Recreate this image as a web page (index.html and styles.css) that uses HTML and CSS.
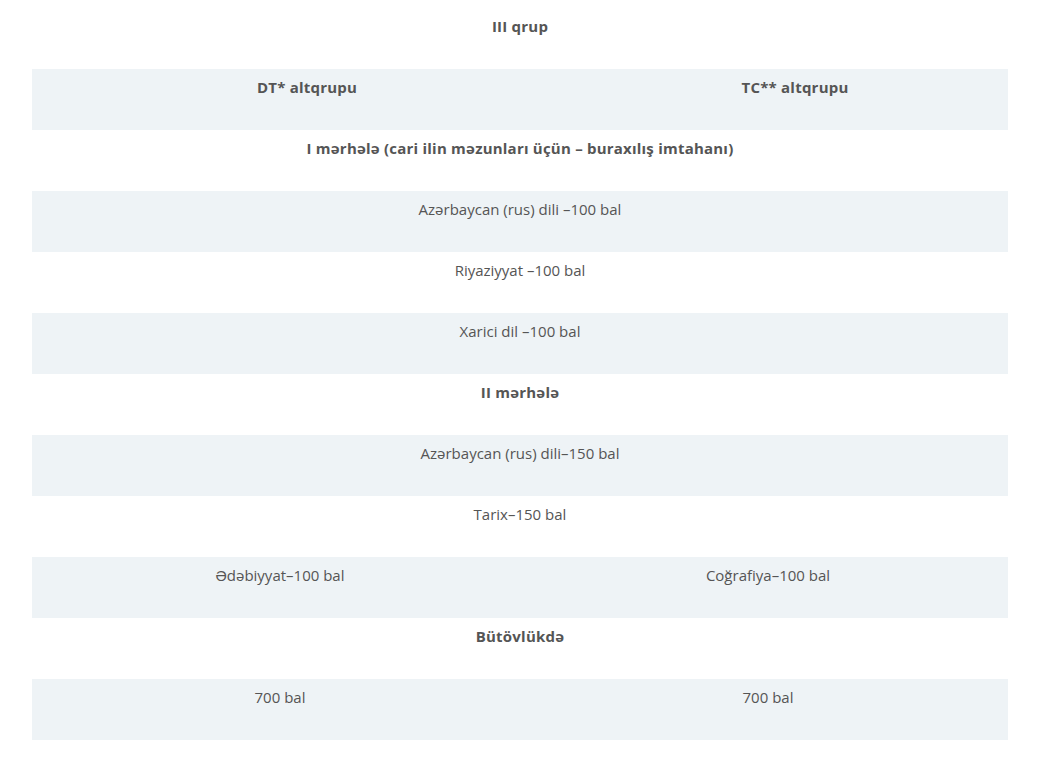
FILE: index.html
```html
<!DOCTYPE html>
<html>
<head>
<meta charset="utf-8">
<link rel="stylesheet" href="styles.css">
</head>
<body>
<div class="table">
  <div class="row"><div class="cell b">III qrup</div></div>
  <div class="row alt head"><div class="cell b">DT* altqrupu</div><div class="cell b">TC** altqrupu</div></div>
  <div class="row"><div class="cell b">I mərhələ (cari ilin məzunları üçün – buraxılış imtahanı)</div></div>
  <div class="row alt"><div class="cell">Azərbaycan (rus) dili –100 bal</div></div>
  <div class="row"><div class="cell">Riyaziyyat –100 bal</div></div>
  <div class="row alt"><div class="cell">Xarici dil –100 bal</div></div>
  <div class="row"><div class="cell b">II mərhələ</div></div>
  <div class="row alt"><div class="cell">Azərbaycan (rus) dili–150 bal</div></div>
  <div class="row"><div class="cell">Tarix–150 bal</div></div>
  <div class="row alt split"><div class="cell">Ədəbiyyat–100 bal</div><div class="cell">Coğrafiya–100 bal</div></div>
  <div class="row"><div class="cell b">Bütövlükdə</div></div>
  <div class="row alt split"><div class="cell">700 bal</div><div class="cell">700 bal</div></div>
</div>
</body>
</html>
```
FILE: styles.css
```css
html, body {
  margin: 0;
  padding: 0;
  background: #fff;
}
body {
  padding: 8px 53px 0 32px;
  font-family: "Open Sans", "Liberation Sans", sans-serif;
  font-size: 15px;
  color: #555;
}
.table {
  width: 976px;
  display: flex;
  flex-direction: column;
}
.row {
  height: 61px;
  display: flex;
}
.row.alt {
  background: #eef3f6;
}
.cell {
  flex: 1;
  text-align: center;
  padding-top: 8px;
  line-height: 21px;
}
.b {
  font-weight: 700;
  letter-spacing: 0.22px;
}
.head .cell:first-child { flex: 0 0 550px; }
.head .cell:last-child { flex: 0 0 426px; }
.split .cell:first-child { flex: 0 0 496px; }
.split .cell:last-child { flex: 0 0 480px; }
```
